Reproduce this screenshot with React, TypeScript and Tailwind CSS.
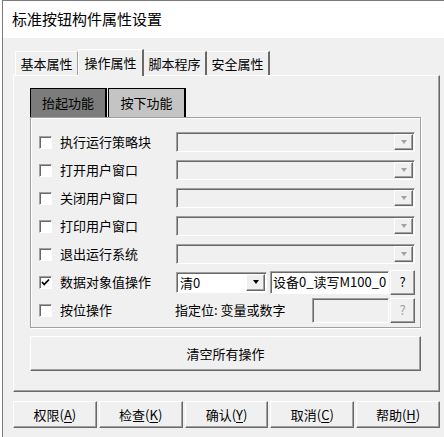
import React from "react";

const raised =
  "border border-t-white border-l-white border-r-[#696969] border-b-[#696969] shadow-[inset_-1px_-1px_0_#a0a0a0]";
const sunken =
  "border border-t-[#a0a0a0] border-l-[#a0a0a0] border-r-white border-b-white shadow-[inset_1px_1px_0_#696969]";

function Arrow({ enabled }: { enabled?: boolean }) {
  return (
    <div
      className={`w-0 h-0 border-x-[3px] border-x-transparent border-t-[4px] ${
        enabled ? "border-t-black" : "border-t-[#a0a0a0]"
      }`}
    ></div>
  );
}

function Check({ checked }: { checked?: boolean }) {
  return (
    <div className={`w-[13px] h-[13px] bg-white flex items-center justify-center ${sunken}`}>
      {checked && (
        <svg width="9" height="9" viewBox="0 0 9 9">
          <path d="M1 4 L3.2 6.5 L8 1.5" stroke="#000" strokeWidth="1.8" fill="none" />
        </svg>
      )}
    </div>
  );
}

function DisabledCombo() {
  return (
    <div className={`w-[239px] h-[20px] bg-[#f0f0f0] flex justify-end p-[1px] ${sunken}`}>
      <div className={`w-[19px] h-full bg-[#f0f0f0] flex items-center justify-center ${raised}`}>
        <Arrow />
      </div>
    </div>
  );
}

const rows = ["执行运行策略块", "打开用户窗口", "关闭用户窗口", "打印用户窗口", "退出运行系统"];

export default function App() {
  return (
    <div
      className="w-[444px] h-[437px] bg-white overflow-hidden text-[13px] text-black"
      style={{ fontFamily: '"Noto Sans CJK SC", "Liberation Sans", sans-serif' }}
    >
      <div className="ml-[2px] h-full border-l border-t border-[#7a7a7a] flex flex-col">
        {/* Title */}
        <div className="h-[37px] bg-white flex items-center pl-[9px] text-[15px]">标准按钮构件属性设置</div>

        <div className="flex-1 bg-[#f0f0f0] pl-[10px] pt-[11px]">
          {/* Tabs */}
          <div className="flex items-end h-[26px] ml-[2px]">
            <div className="w-[63px] h-[24px] flex items-center justify-center border-t border-l border-r border-t-white border-l-white border-r-[#a0a0a0]">
              基本属性
            </div>
            <div className="w-[66px] h-[27px] mb-[-1px] bg-[#f0f0f0] relative z-10 flex items-center justify-center border-t border-l border-r-2 border-t-white border-l-white border-r-[#696969]">
              操作属性
            </div>
            <div className="w-[63px] h-[24px] flex items-center justify-center border-t border-r-2 border-t-white border-r-[#696969]">
              脚本程序
            </div>
            <div className="w-[63px] h-[24px] flex items-center justify-center border-t border-r-2 border-t-white border-r-[#696969]">
              安全属性
            </div>
          </div>

          {/* Panel */}
          <div className="w-[427px] h-[317px] border border-t-white border-l-white border-r-[#696969] border-b-[#696969] shadow-[inset_-1px_-1px_0_#a0a0a0] pl-[16px] pt-[12px]">
            <div className="flex h-[29px]">
              <div className="w-[77px] bg-[#7c7c7c] border-t border-l border-r-2 border-black flex items-center justify-center">
                抬起功能
              </div>
              <div className="w-[78px] ml-[1px] bg-[#c4c4c4] border-t border-l border-r-2 border-black flex items-center justify-center">
                按下功能
              </div>
            </div>

            <div className="w-[391px] h-[211px] border border-[#a0a0a0] shadow-[inset_1px_1px_0_#fff,1px_1px_0_#fff] pt-[10px] pl-[8px]">
              {rows.map((r) => (
                <div key={r} className="h-[28px] flex items-center">
                  <Check />
                  <div className="w-[116px] ml-[8px]">{r}</div>
                  <DisabledCombo />
                </div>
              ))}
              <div className="h-[28px] flex items-center">
                <Check checked />
                <div className="w-[116px] ml-[8px]">数据对象值操作</div>
                <div className={`w-[91px] h-[21px] bg-white flex items-center p-[1px] ${sunken}`}>
                  <div className="flex-1 pl-[2px] leading-none">清0</div>
                  <div className={`w-[19px] h-full bg-[#f0f0f0] flex items-center justify-center ${raised}`}>
                    <Arrow enabled />
                  </div>
                </div>
                <div className={`w-[119px] h-[23px] ml-[3px] bg-white flex items-center pl-[2px] ${sunken}`}>
                  设备0_读写M100_0
                </div>
                <div className={`w-[25px] h-[25px] ml-[1px] flex items-center justify-center ${raised}`}>?</div>
              </div>
              <div className="h-[28px] flex items-center">
                <Check />
                <div className="w-[115px] ml-[8px]">按位操作</div>
                <div className="w-[137px]">指定位: 变量或数字</div>
                <div className={`w-[77px] h-[25px] bg-[#f0f0f0] ${sunken}`}></div>
                <div className={`w-[25px] h-[25px] ml-[1px] flex items-center justify-center text-[#a0a0a0] ${raised}`}>
                  ?
                </div>
              </div>
            </div>

            <div className={`w-[391px] h-[35px] mt-[8px] flex items-center justify-center ${raised}`}>清空所有操作</div>
          </div>

          {/* Bottom buttons */}
          <div className="flex gap-[2px] mt-[9px] w-[427px]">
            {[
              ["权限", "A"],
              ["检查", "K"],
              ["确认", "Y"],
              ["取消", "C"],
              ["帮助", "H"],
            ].map(([t, k]) => (
              <div key={k} className={`flex-1 h-[27px] flex items-center justify-center ${raised}`}>
                {t}(<span className="underline underline-offset-2">{k}</span>)
              </div>
            ))}
          </div>
        </div>
      </div>
    </div>
  );
}
